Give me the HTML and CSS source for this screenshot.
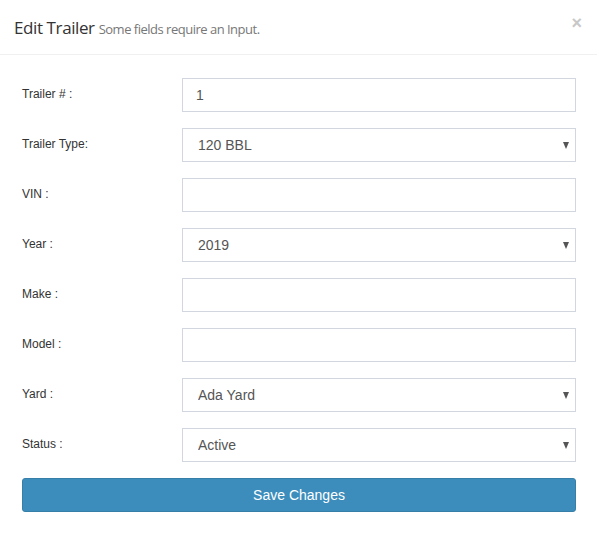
FILE: index.html
```html
<!DOCTYPE html>
<html>
<head>
<meta charset="utf-8">
<link rel="stylesheet" href="styles.css">
</head>
<body>
<div class="modal">
  <div class="modal-header">
    <h4 class="title">Edit Trailer <small>Some fields require an Input.</small></h4>
    <span class="close">&times;</span>
  </div>
  <div class="modal-body">
    <div class="row"><label>Trailer # :</label><input class="control" type="text" value="1"></div>
    <div class="row"><label>Trailer Type:</label><div class="sel"><select class="control"><option>120 BBL</option></select><span class="arrow"></span></div></div>
    <div class="row"><label>VIN :</label><input class="control" type="text" value=""></div>
    <div class="row"><label>Year :</label><div class="sel"><select class="control"><option>2019</option></select><span class="arrow"></span></div></div>
    <div class="row"><label>Make :</label><input class="control" type="text" value=""></div>
    <div class="row"><label>Model :</label><input class="control" type="text" value=""></div>
    <div class="row"><label>Yard :</label><div class="sel"><select class="control"><option>Ada Yard</option></select><span class="arrow"></span></div></div>
    <div class="row"><label>Status :</label><div class="sel"><select class="control"><option>Active</option></select><span class="arrow"></span></div></div>
    <button class="btn">Save Changes</button>
  </div>
</div>
</body>
</html>
```
FILE: styles.css
```css
* { box-sizing: border-box; }
html, body { margin: 0; padding: 0; background: #fff; }
body { font-family: "Liberation Sans", Arial, sans-serif; color: #333; }
.modal { width: 597px; height: 552px; background: #fff; }
.modal-header {
  height: 55px;
  border-bottom: 1px solid #f0f0f0;
  display: flex;
  align-items: flex-start;
  justify-content: space-between;
  padding: 0 14px 0 14px;
}
.title {
  margin: 17px 0 0 0;
  font-family: "Open Sans", sans-serif;
  font-weight: 400;
  font-size: 17px;
  letter-spacing: -0.4px;
  color: #333;
  line-height: 22px;
}
.title small {
  font-size: 13px;
  color: #777;
  letter-spacing: -0.5px;
}
.close {
  font-family: "Liberation Sans", Arial, sans-serif;
  font-weight: bold;
  font-size: 18px;
  color: #c8c8c8;
  margin-top: 13px;
  margin-right: 1px;
  line-height: 20px;
}
.modal-body {
  padding: 23px 21px 0 22px;
  display: flex;
  flex-direction: column;
  gap: 16px;
}
.row {
  display: grid;
  grid-template-columns: 160px 1fr;
  align-items: start;
}
.row label {
  font-size: 12px;
  line-height: 14px;
  padding-top: 9px;
  color: #333;
}
.control {
  width: 100%;
  height: 34px;
  border: 1px solid #d2d6de;
  border-radius: 0;
  background: #fff;
  font-family: "Liberation Sans", Arial, sans-serif;
  font-size: 14px;
  color: #555;
  padding: 0 12px 0 13px;
  margin: 0;
  outline: none;
  display: block;
}
.sel { position: relative; }
select.control {
  appearance: none;
  -webkit-appearance: none;
  padding-left: 15px;
}
.arrow {
  position: absolute;
  right: 7px;
  top: 14px;
  width: 0;
  height: 0;
  border-left: 3.5px solid transparent;
  border-right: 3.5px solid transparent;
  border-top: 7px solid #555;
}
.btn {
  height: 34px;
  width: 100%;
  background: #3c8dbc;
  border: 1px solid #367fa9;
  border-radius: 3px;
  color: #fff;
  font-family: "Liberation Sans", Arial, sans-serif;
  font-size: 14px;
  padding: 0;
}
```
